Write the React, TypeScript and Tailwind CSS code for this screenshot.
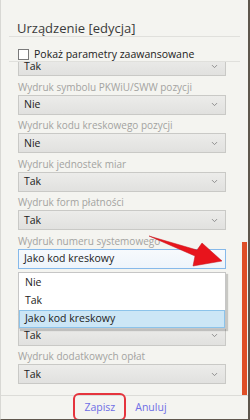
import { ChevronDown } from "lucide-react";

const FONT = { fontFamily: '"Open Sans", "Noto Sans", sans-serif' };

type Field = { label: string; value: string; hidden?: boolean };

const FIELDS_TOP: Field[] = [
  { label: "Wydruk symbolu PKWiU/SWW pozycji", value: "Nie" },
  { label: "Wydruk kodu kreskowego pozycji", value: "Nie" },
  { label: "Wydruk jednostek miar", value: "Tak" },
  { label: "Wydruk form płatności", value: "Tak" },
];

// the first one sits fully behind the open list
const FIELDS_BOTTOM: Field[] = [
  { label: "Wydruk nazwy kasjera", value: "Tak", hidden: true },
  { label: "Wydruk numeru kasy", value: "Tak" },
  { label: "Wydruk dodatkowych opłat", value: "Tak" },
];

function Select({ value, focused }: { value: string; focused?: boolean }) {
  return (
    <div
      className={
        focused
          ? "h-[20px] flex items-center justify-between pl-[5px] pr-[6px] border border-[#86b9ea] bg-gradient-to-b from-[#f7fafd] to-[#eef4fb]"
          : "h-[20px] flex items-center justify-between pl-[5px] pr-[6px] border border-[#c9c9c6] bg-gradient-to-b from-[#ececea] to-[#e1e1df]"
      }
    >
      <span className="text-[10.5px] leading-none text-[#1c1c1c]">{value}</span>
      <ChevronDown
        className={focused ? "h-[9px] w-[9px] text-[#333]" : "h-[9px] w-[9px] text-[#8a8a8a]"}
        strokeWidth={2.5}
      />
    </div>
  );
}

function Label({ children }: { children: string }) {
  return (
    <p className="mt-[3.5px] h-[15px] leading-[15px] text-[10px] text-[#a3a3a0] whitespace-nowrap">
      {children}
    </p>
  );
}

export default function App() {
  return (
    <div
      style={FONT}
      className="relative w-[250px] h-[420px] overflow-hidden bg-[#f4f4f0] border-l border-[#d8d8d4] border-r-2 border-r-[#5d564c] border-b border-b-[#5d564c] flex flex-col"
    >
      {/* title */}
      <h1 className="shrink-0 pl-[16px] pt-[20px] h-[36px] text-[13px] leading-[16px] text-[#3a3a3a]">
        Urządzenie [edycja]
      </h1>
      <div className="shrink-0 mx-[8px] h-px bg-[#e0e0dc]" />

      <label className="shrink-0 h-[24px] pl-[17px] pt-[12px] flex items-start gap-[5px]">
        <span className="h-[11px] w-[11px] border border-[#7a7a7a] bg-white" />
        <span className="text-[10.5px] leading-[10px] text-[#222]">Pokaż parametry zaawansowane</span>
      </label>
      <div className="shrink-0 mx-[8px] h-px bg-[#e0e0dc]" />

      {/* scrolled body */}
      <div className="relative flex-1 overflow-hidden pl-[17px] pr-[22px]">
        <div className="-mt-[6px] mb-[2px]">
          <Select value="Tak" />
        </div>
        {FIELDS_TOP.map((f) => (
          <div key={f.label}>
            <Label>{f.label}</Label>
            <Select value={f.value} />
          </div>
        ))}

        <div className="relative">
          <Label>Wydruk numeru systemowego</Label>
          <Select value="Jako kod kreskowy" focused />
          <ul className="absolute z-10 left-0 right-0 top-[38.5px] h-[57px] bg-white border border-[#c6c6c6] shadow-[2px_2px_1px_rgba(0,0,0,0.18)] pt-[1px] text-[10.5px] text-[#1c1c1c]">
            <li className="h-[18px] flex items-center pl-[6px]">Nie</li>
            <li className="h-[18px] flex items-center pl-[6px]">Tak</li>
            <li className="h-[18px] flex items-center pl-[5px] bg-[#cce6f6] border border-[#8cc3ea]">
              Jako kod kreskowy
            </li>
          </ul>
        </div>

        {FIELDS_BOTTOM.map((f) => (
          <div key={f.label} className={f.hidden ? "invisible" : undefined}>
            <Label>{f.label}</Label>
            <Select value={f.value} />
          </div>
        ))}

        {/* scrollbar */}
        <div className="absolute right-[1px] top-[180px] bottom-0 w-[5px] bg-[#df4f27]" />
      </div>

      {/* footer */}
      <div className="shrink-0 h-[24px] border-t border-[#dcdcd8] flex items-center justify-center gap-[20px] pl-[2px] text-[10.5px] text-[#6e6ee6]">
        <span className="relative">
          Zapisz
          <span className="absolute -left-[11px] -right-[11px] -top-[7px] -bottom-[6px] border-2 border-[#e5343d] rounded-[6px]" />
        </span>
        <span>Anuluj</span>
      </div>

      {/* annotation arrow */}
      <svg className="absolute left-0 top-0 pointer-events-none" width="250" height="420">
        <polygon
          points="148,236 196,250 201,243 221,261 192,266 194,256"
          fill="#e8141c"
          stroke="#c51018"
          strokeWidth="0.5"
          strokeLinejoin="round"
        />
      </svg>
    </div>
  );
}
